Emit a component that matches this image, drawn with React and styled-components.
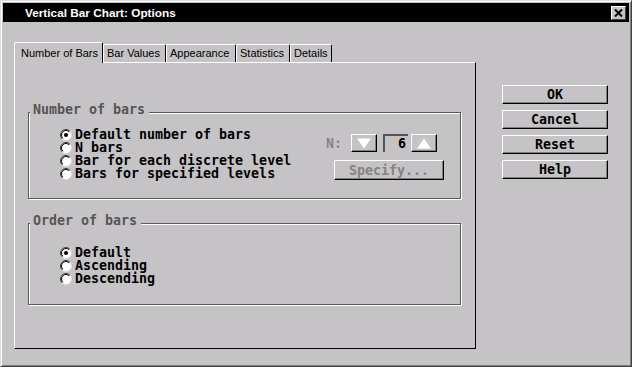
import React from "react";
import styled, { createGlobalStyle } from "styled-components";

const BG = "#c6c3c6";
const MONO = `"DejaVu Sans Mono", "Liberation Mono", monospace`;
const SANS = `"Liberation Sans", Arial, sans-serif`;

const Global = createGlobalStyle`
  html, body { margin: 0; padding: 0; background: ${BG}; }
  * { box-sizing: border-box; }
`;

const Window = styled.div`
  width: 632px;
  height: 367px;
  background: ${BG};
  border: 1px solid;
  border-color: #dedede #404040 #404040 #dedede;
  box-shadow: inset 1px 1px 0 #ffffff, inset -1px -1px 0 #808080;
  padding: 2px;
  display: flex;
  flex-direction: column;
`;

const TitleBar = styled.div`
  height: 19px;
  background: #000;
  color: #fff;
  display: flex;
  align-items: center;
  padding-right: 3px;
  font: bold 11.8px ${SANS};
`;

const TitleText = styled.span`
  flex: 1;
  margin-left: 22px;
`;

const CloseButton = styled.div`
  width: 15px;
  height: 14px;
  background: ${BG};
  border: 1px solid;
  border-color: #fff #404040 #404040 #fff;
  display: flex;
  align-items: center;
  justify-content: center;
`;

const Body = styled.div`
  flex: 1;
  display: flex;
  align-items: flex-start;
  padding: 20px 0 0 11px;
`;

const LeftColumn = styled.div`
  width: 462px;
  display: flex;
  flex-direction: column;
`;

const TabRow = styled.div`
  display: flex;
  align-items: flex-end;
  height: 20px;
  position: relative;
  z-index: 1;
`;

const Tab = styled.div`
  width: ${(p) => p.$w}px;
  font: 11px ${SANS};
  line-height: 13px;
  color: #000;
  white-space: nowrap;
  background: ${BG};
  border-top: 1px solid #fff;
  border-left: 1px solid #fff;
  border-right: 1px solid #000;
  border-radius: 2px 2px 0 0;
  height: ${(p) => (p.$active ? "21px" : "18px")};
  padding: ${(p) => (p.$active ? "4px 0 0 6px" : "2px 0 0 3px")};
  margin-bottom: ${(p) => (p.$active ? "-1px" : "0")};
`;

const Panel = styled.div`
  height: 287px;
  border-top: 1px solid #fff;
  border-left: 1px solid #fff;
  border-right: 1px solid #000;
  border-bottom: 1px solid #000;
  padding: 0 14px 0 13px;
  display: flex;
  flex-direction: column;
`;

const Group = styled.div`
  position: relative;
  height: ${(p) => p.$h}px;
  margin-top: ${(p) => p.$mt}px;
  border: 1px solid #595959;
  box-shadow: 1px 1px 0 #fff, inset 1px 1px 0 #fff;
  padding: ${(p) => p.$pt}px 16px 0 31px;
  display: flex;
  justify-content: space-between;
  align-items: flex-start;
`;

const Legend = styled.div`
  position: absolute;
  left: 1px;
  top: -10px;
  padding: 0 4px 0 3px;
  background: ${BG};
  font: bold 13.3px ${MONO};
  line-height: 13px;
  color: #555;
  white-space: pre;
`;

const RadioList = styled.div`
  display: flex;
  flex-direction: column;
`;

const RadioRow = styled.div`
  display: flex;
  align-items: center;
  height: 13px;
  gap: 3px;
  font: bold 13.3px ${MONO};
  line-height: 13px;
  color: #000;
  white-space: pre;
`;

const Radio = ({ checked }) => (
  <svg width="12" height="12" viewBox="0 0 12 12">
    <circle cx="6" cy="6" r="5.5" fill="#fff" stroke="#d8d8d8" />
    <path d="M2.1 9.9 A5.5 5.5 0 0 1 9.9 2.1" fill="none" stroke="#404040" strokeWidth="1" />
    <path d="M2.8 9.2 A4.5 4.5 0 0 1 9.2 2.8" fill="none" stroke="#000" strokeWidth="1" />
    {checked && <circle cx="6" cy="6" r="2" fill="#000" />}
  </svg>
);

const Controls = styled.div`
  display: flex;
  flex-direction: column;
  align-items: flex-end;
  padding-top: 6px;
`;

const SpinRow = styled.div`
  display: flex;
  align-items: center;
  margin-right: 7px;
`;

const DisabledLabel = styled.span`
  font: bold 13.3px ${MONO};
  line-height: 13px;
  color: #848284;
  margin-right: 9px;
`;

const SpinButton = styled.div`
  width: 26px;
  height: 18px;
  background: ${BG};
  border: 1px solid;
  border-color: #fff #000 #000 #fff;
  box-shadow: inset -1px -1px 0 #808080;
  display: flex;
  align-items: center;
  justify-content: center;
`;

const SpinField = styled.div`
  width: 25px;
  height: 18px;
  margin: 0 3px 0 6px;
  border-top: 2px solid #555;
  border-left: 2px solid #555;
  font: bold 13.3px ${MONO};
  line-height: 15px;
  text-align: right;
  padding-right: 2px;
  color: #000;
`;

const PushButton = styled.div`
  width: ${(p) => p.$w}px;
  height: ${(p) => p.$h}px;
  background: ${BG};
  border: 1px solid;
  border-color: #fff #000 #000 #fff;
  box-shadow: inset -1px -1px 0 #808080;
  display: flex;
  align-items: center;
  justify-content: center;
  font: bold 13.3px ${MONO};
  color: ${(p) => (p.$disabled ? "#848284" : "#000")};
  white-space: pre;
`;

const SpecifyWrap = styled.div`
  margin-top: 8px;
`;

const ButtonColumn = styled.div`
  display: flex;
  flex-direction: column;
  gap: 6px;
  margin: 43px 0 0 26px;
`;

const Triangle = ({ up }) => (
  <svg width="16" height="11" viewBox="0 0 16 11">
    {up ? (
      <polygon points="1,10.5 15,10.5 8,0.5" fill="#fff" />
    ) : (
      <polygon points="1,0.5 15,0.5 8,10.5" fill="#fff" />
    )}
  </svg>
);

const CloseIcon = () => (
  <svg width="9" height="8" viewBox="0 0 9 8">
    <path d="M1 0.5 L8 7.5 M8 0.5 L1 7.5" stroke="#000" strokeWidth="2" />
  </svg>
);

const tabs = [
  { label: "Number of Bars", w: 89 },
  { label: "Bar Values", w: 63 },
  { label: "Appearance", w: 70 },
  { label: "Statistics", w: 54 },
  { label: "Details", w: 42 },
];

export default function App() {
  return (
    <>
      <Global />
      <Window>
        <TitleBar>
          <TitleText>Vertical Bar Chart: Options</TitleText>
          <CloseButton>
            <CloseIcon />
          </CloseButton>
        </TitleBar>
        <Body>
          <LeftColumn>
            <TabRow>
              {tabs.map((t, i) => (
                <Tab key={t.label} $w={t.w} $active={i === 0}>
                  {t.label}
                </Tab>
              ))}
            </TabRow>
            <Panel>
              <Group $mt={49} $h={87} $pt={15}>
                <Legend>Number of bars</Legend>
                <RadioList>
                  <RadioRow><Radio checked />Default number of bars</RadioRow>
                  <RadioRow><Radio />N bars</RadioRow>
                  <RadioRow><Radio />Bar for each discrete level</RadioRow>
                  <RadioRow><Radio />Bars for specified levels</RadioRow>
                </RadioList>
                <Controls>
                  <SpinRow>
                    <DisabledLabel>N:</DisabledLabel>
                    <SpinButton><Triangle /></SpinButton>
                    <SpinField>6</SpinField>
                    <SpinButton><Triangle up /></SpinButton>
                  </SpinRow>
                  <SpecifyWrap>
                    <PushButton $w={110} $h={20} $disabled>Specify...</PushButton>
                  </SpecifyWrap>
                </Controls>
              </Group>
              <Group $mt={24} $h={82} $pt={22}>
                <Legend>Order of bars</Legend>
                <RadioList>
                  <RadioRow><Radio checked />Default</RadioRow>
                  <RadioRow><Radio />Ascending</RadioRow>
                  <RadioRow><Radio />Descending</RadioRow>
                </RadioList>
              </Group>
            </Panel>
          </LeftColumn>
          <ButtonColumn>
            <PushButton $w={106} $h={19}>OK</PushButton>
            <PushButton $w={106} $h={19}>Cancel</PushButton>
            <PushButton $w={106} $h={19}>Reset</PushButton>
            <PushButton $w={106} $h={19}>Help</PushButton>
          </ButtonColumn>
        </Body>
      </Window>
    </>
  );
}
